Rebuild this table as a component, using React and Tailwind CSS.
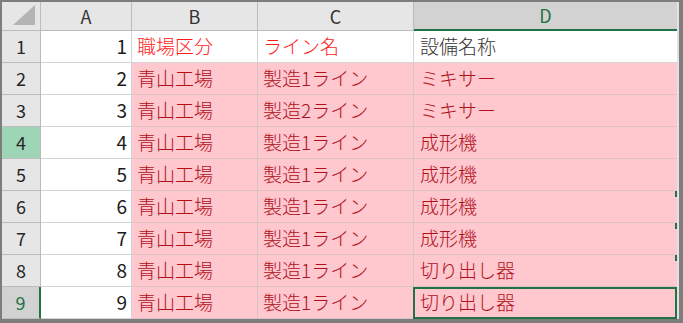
import React from 'react';

const cols = ['A', 'B', 'C', 'D'];

const rows = [
  { n: 1, b: '職場区分', c: 'ライン名', d: '設備名称', head: true },
  { n: 2, b: '青山工場', c: '製造1ライン', d: 'ミキサー' },
  { n: 3, b: '青山工場', c: '製造2ライン', d: 'ミキサー' },
  { n: 4, b: '青山工場', c: '製造1ライン', d: '成形機' },
  { n: 5, b: '青山工場', c: '製造1ライン', d: '成形機' },
  { n: 6, b: '青山工場', c: '製造1ライン', d: '成形機' },
  { n: 7, b: '青山工場', c: '製造1ライン', d: '成形機' },
  { n: 8, b: '青山工場', c: '製造1ライン', d: '切り出し器' },
  { n: 9, b: '青山工場', c: '製造1ライン', d: '切り出し器' },
];

const font = { fontFamily: '"Noto Sans CJK JP", "Noto Sans", sans-serif' };

const RowHeader = ({ n }) => {
  // row 4 is highlighted, row 9 is the active row
  let cls = 'bg-[#e6e6e6] text-[#262626] border-r border-[#bcbcbc]';
  if (n === 4) cls = 'bg-[#9fd5b7] text-[#262626] border-r border-[#bcbcbc]';
  if (n === 9) cls = 'bg-[#d2d2d2] text-[#217346] border-r-2 border-[#217346]';
  return (
    <div className={`flex items-center justify-center h-[32px] border-b border-b-[#bcbcbc] text-[18px] font-normal ${cls}`}>
      {n}
    </div>
  );
};

const App = () => {
  return (
    <div className="w-[683px] h-[323px] bg-[#7d7d7d] pt-[2px] pl-[2px] overflow-hidden font-light" style={font}>
      <div className="flex">
        <div className="grid grid-cols-[39px_91px_126px_156px_263px] bg-white">
          {/* column headers */}
          <div className="h-[29px] bg-[#e6e6e6] border-r border-b border-[#bcbcbc] flex items-end justify-end pr-[5px] pb-[5px]">
            <svg width="22" height="20" viewBox="0 0 22 20">
              <polygon points="0,20 22,20 22,0" fill="#b4b4b4" />
            </svg>
          </div>
          {cols.map((c) =>
            c === 'D' ? (
              <div
                key={c}
                className="h-[29px] bg-[#d2d2d2] border-b-2 border-[#217346] flex items-center justify-center text-[18px] font-normal text-[#217346]"
              >
                {c}
              </div>
            ) : (
              <div
                key={c}
                className="h-[29px] bg-[#e6e6e6] border-r border-b border-[#bcbcbc] flex items-center justify-center text-[18px] font-normal text-[#333333]"
              >
                {c}
              </div>
            )
          )}

          {rows.map((r) => (
            <React.Fragment key={r.n}>
              <RowHeader n={r.n} />
              <div className="h-[32px] border-r border-b border-[#d4d4d4] flex items-center justify-end pr-[4px] text-[19px] font-normal text-[#1a1a1a]">
                {r.n}
              </div>
              {r.head ? (
                <>
                  <div className="h-[32px] border-r border-b border-[#d4d4d4] flex items-center pl-[5px] text-[19px] text-[#ff1a1a]">
                    {r.b}
                  </div>
                  <div className="h-[32px] border-r border-b border-[#d4d4d4] flex items-center pl-[5px] text-[19px] text-[#ff1a1a]">
                    {r.c}
                  </div>
                  <div className="h-[32px] border-b border-[#d4d4d4] flex items-center pl-[6px] text-[19px] text-[#333333]">
                    {r.d}
                  </div>
                </>
              ) : (
                <>
                  <div className="h-[32px] bg-[#ffc7ce] border-r border-b border-[#d9c3c6] flex items-center pl-[5px] text-[19px] text-[#b0101a]">
                    {r.b}
                  </div>
                  <div className="h-[32px] bg-[#ffc7ce] border-r border-b border-[#d9c3c6] flex items-center pl-[5px] text-[19px] text-[#b0101a]">
                    {r.c}
                  </div>
                  <div className="relative h-[32px] bg-[#ffc7ce] border-b border-[#d9c3c6] flex items-center pl-[6px] text-[19px] text-[#b0101a]">
                    {r.d}
                    {(r.n === 6 || r.n === 7 || r.n === 8) && (
                      <span className="absolute right-0 top-0 w-[2px] h-[6px] bg-[#217346]" />
                    )}
                    {r.n === 9 && (
                      <span className="absolute left-[-1px] top-[0px] right-0 bottom-[-1px] border-2 border-[#217346]" />
                    )}
                  </div>
                </>
              )}
            </React.Fragment>
          ))}
        </div>
        <div className="w-[2px] bg-[#e2e2e2]" />
      </div>
    </div>
  );
};

export default App;
